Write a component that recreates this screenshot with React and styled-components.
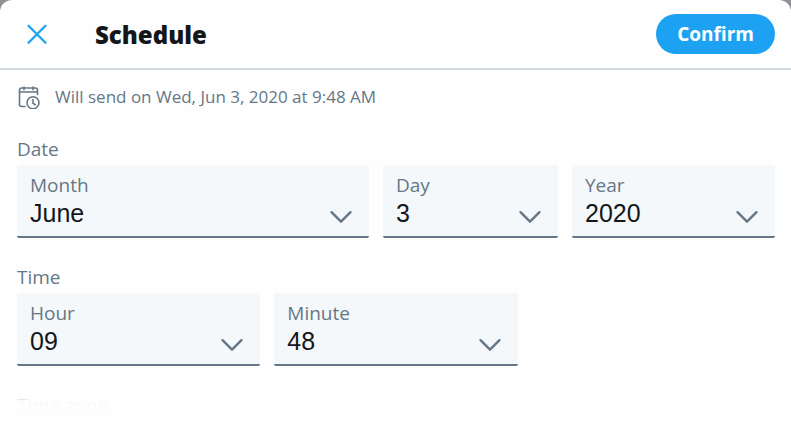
import React, { useState } from "react";
import styled, { createGlobalStyle } from "styled-components";

const GlobalStyle = createGlobalStyle`
  * {
    box-sizing: border-box;
  }

  body {
    margin: 0;
    background-color: #8f9194;
    font-family: "Open Sans", "Noto Sans", sans-serif;
    color: #657786;
  }
`;

const Modal = styled.main`
  min-height: 100vh;
  background-color: #fefefe;
  border-radius: 12px 12px 0 0;
`;

const Header = styled.header`
  display: flex;
  align-items: center;
  height: 70px;
  padding: 0 16px;
  border-bottom: 2px solid #d0d9e0;
`;

const CloseButton = styled.button`
  display: flex;
  width: 42px;
  padding: 10px;
  border: 0;
  background: none;
  color: #1da1f2;
  cursor: pointer;
`;

const Title = styled.h1`
  flex: 1;
  margin: 0 0 0 37px;
  padding-top: 2px;
  font-size: 24px;
  font-weight: 800;
  line-height: 32px;
  color: #14171a;
`;

const ConfirmButton = styled.button`
  height: 40px;
  padding: 0 21px;
  border: 0;
  border-radius: 20px;
  background-color: #1da1f2;
  color: white;
  font: 700 19px "Open Sans", "Noto Sans", sans-serif;
  cursor: pointer;
`;

const Content = styled.div`
  padding: 14px 16px 0 17px;
`;

const SendInfo = styled.p`
  display: flex;
  align-items: center;
  gap: 14px;
  margin: 0 0 26px;
  font-size: 17px;
  line-height: 26px;
`;

const Group = styled.fieldset`
  margin: 0 0 26px;
  padding: 0;
  border: 0;
`;

const GroupTitle = styled.legend`
  padding: 0 0 2px;
  font-size: 19px;
  line-height: 27px;
`;

const Fields = styled.div`
  display: grid;
  grid-template-columns: ${({ $columns }) => $columns};
  gap: 14px;
`;

const Field = styled.div`
  position: relative;
  height: 73px;
  border-bottom: 2px solid #657786;
  border-radius: 2px;
  background-color: #f5f8fa;
`;

const FieldLabel = styled.label`
  position: absolute;
  top: 7px;
  left: 13px;
  font-size: 19px;
  line-height: 26px;
  pointer-events: none;
`;

const Select = styled.select`
  display: block;
  width: 100%;
  height: 71px;
  padding: 24px 44px 0 13px;
  border: 0;
  appearance: none;
  background: transparent;
  color: #14171a;
  font: 25px "Liberation Sans", Arial, sans-serif;
  cursor: pointer;
`;

const Chevron = styled.svg`
  position: absolute;
  right: 16px;
  bottom: 11px;
  pointer-events: none;
`;

const FadedTitle = styled.h2`
  margin: 0;
  font-size: 19px;
  font-weight: 400;
  line-height: 27px;
  color: transparent;
  background: linear-gradient(#e0e4e7 7px, #f7f7f7 9px, #fcfcfc 20px);
  background-clip: text;
`;

const range = (from, to) =>
  Array.from({ length: to - from + 1 }, (_, i) => String(from + i));

const pad = (value) => value.padStart(2, "0");

const MONTHS = [
  "January", "February", "March", "April", "May", "June", "July",
  "August", "September", "October", "November", "December",
];

const CloseIcon = () => (
  <svg width="22" height="22" viewBox="0 0 22 22" fill="none" stroke="currentColor" strokeWidth="2.3" strokeLinecap="round">
    <path d="M2.5 2.8l17 17M19.5 2.8l-17 17" />
  </svg>
);

const ScheduleIcon = () => (
  <svg width="24" height="24" viewBox="0 0 24 24" fill="none" stroke="currentColor" strokeWidth="1.6" strokeLinecap="round">
    <path d="M8 21.5H4.5a2 2 0 0 1-2-2V5a2 2 0 0 1 2-2h14a2 2 0 0 1 2 2v4.5M2.5 7h18M7 2v2.8M16 2v2.8" />
    <circle cx="16" cy="17.8" r="6" />
    <path d="M16 14.5v3.7l2.5 1.6" />
  </svg>
);

const SelectField = ({ id, label, options, initial }) => {
  const [value, setValue] = useState(initial);

  return (
    <Field>
      <FieldLabel htmlFor={id}>{label}</FieldLabel>
      <Select id={id} value={value} onChange={(e) => setValue(e.target.value)}>
        {options.map((option) => (
          <option key={option}>{option}</option>
        ))}
      </Select>
      <Chevron width="24" height="16" viewBox="0 0 24 16" fill="none" stroke="#657786" strokeWidth="2.4" strokeLinecap="round" strokeLinejoin="round">
        <path d="M2.5 3.2l9.5 9.5 9.5-9.5" />
      </Chevron>
    </Field>
  );
};

const App = () => (
  <>
    <GlobalStyle />
    <Modal>
      <Header>
        <CloseButton type="button" aria-label="Close">
          <CloseIcon />
        </CloseButton>
        <Title>Schedule</Title>
        <ConfirmButton type="button">Confirm</ConfirmButton>
      </Header>
      <Content>
        <SendInfo>
          <ScheduleIcon />
          Will send on Wed, Jun 3, 2020 at 9:48 AM
        </SendInfo>
        <Group>
          <GroupTitle>Date</GroupTitle>
          <Fields $columns="352fr 175fr 203fr">
            <SelectField id="month" label="Month" options={MONTHS} initial="June" />
            <SelectField id="day" label="Day" options={range(1, 31)} initial="3" />
            <SelectField id="year" label="Year" options={range(2020, 2022)} initial="2020" />
          </Fields>
        </Group>
        <Group>
          <GroupTitle>Time</GroupTitle>
          <Fields $columns="repeat(3, 1fr)">
            <SelectField id="hour" label="Hour" options={range(0, 23).map(pad)} initial="09" />
            <SelectField id="minute" label="Minute" options={range(0, 59).map(pad)} initial="48" />
          </Fields>
        </Group>
        <FadedTitle>Time zone</FadedTitle>
      </Content>
    </Modal>
  </>
);

export default App;
